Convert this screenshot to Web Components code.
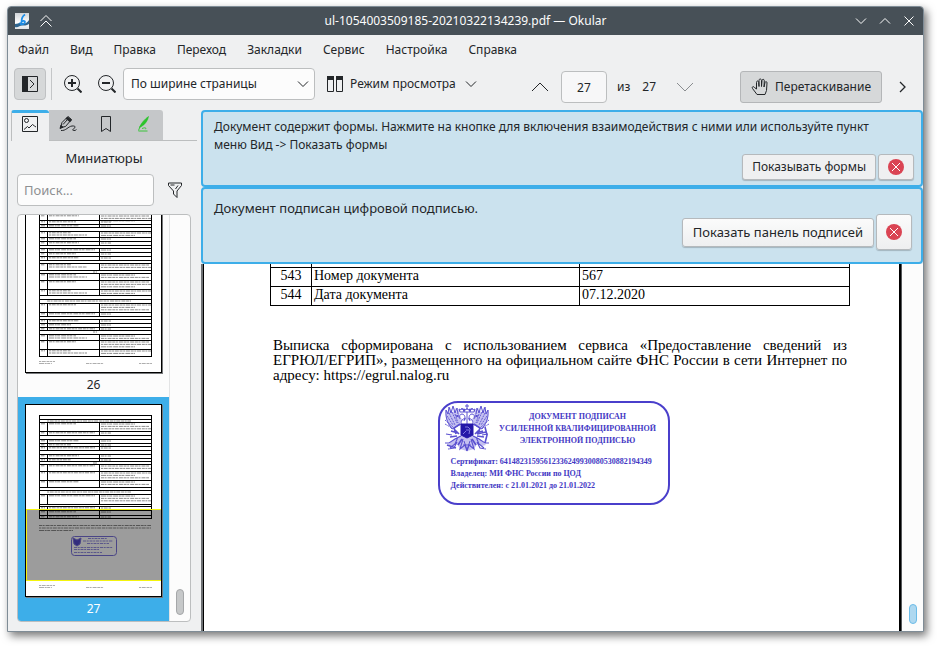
<!DOCTYPE html>
<html lang="ru">
<head>
<meta charset="utf-8">
<title>Okular</title>
<style>
html, body { height: 100%; margin: 0; background: #fff; }
body { font: 12px/18px "Noto Sans", sans-serif; color: #232629; box-sizing: border-box; padding: 6px 13px 14px 7px; --accent: #3daee9; --line: #bcbebf; }
</style>
</head>
<body>
<okular-window></okular-window>
<script>
const ICONS = {
  'side': [16, '<path d="M0 0h6v16H0z" fill="currentColor" stroke="none"/><path d="M.5.5h15v15H.5zM8 4l4 4-4 4"/>'],
  'zoom-in': [18, '<circle cx="8" cy="8" r="7.5"/><path d="M13.5 13.5l4 4" stroke-width="2"/><path d="M4 8h8M8 4v8" stroke-width="2"/>'],
  'zoom-out': [18, '<circle cx="8" cy="8" r="7.5"/><path d="M13.5 13.5l4 4" stroke-width="2"/><path d="M4 8h8" stroke-width="2"/>'],
  'columns': [16, '<path d="M.5.5h6v15h-6zM9.500.500h6v15h-6z"/><path d="M0 0h7v4H0zM9 0h7v4H9z" fill="currentColor" stroke="none"/>'],
  'down': [16, '<path d="M3 5.500l5 5 5-5"/>'],
  'down-big': [18, '<path d="M1 5l8 8 8-8"/>'],
  'up-big': [18, '<path d="M1 13l8-8 8 8"/>'],
  'up': [16, '<path d="M3 10.500l5-5 5 5"/>'],
  'right': [16, '<path d="M6 3l5 5-5 5" stroke-width="1.300"/>'],
  'close': [16, '<path d="M3.500 3.500l9 9M12.500 3.500l-9 9"/>'],
  'shade': [16, '<path d="M2.500 8L8 2.500 13.500 8M2.500 13.500L8 8l5.500 5.500"/>'],
  'image': [16, '<path d="M.5.5h15v15H.5z"/><circle cx="4.500" cy="4.500" r="2"/><path d="M2 13.500l3.500-3 1.500 1.500L10.500 8.500l2 1.500 1.500 1"/>'],
  'annotate': [18, '<path d="M1.500 12.500l1.500-5L9 1.500l3.500 3-6 7z"/><path d="M8.500 1.500l4.500 3.500-2 2.300-4.500-3.600z" fill="currentColor" stroke="none"/><path d="M4 9.500l4.500-5M1 13.500l3-1.200-2-2z" fill="currentColor"/><path d="M2 15.500c5 .5 7-4 11-4.500 4-.3 3.500 1.500 2 2.500s-2 2 0 2 2-.8 2.500-1"/>'],
  'bookmark': [16, '<path d="M3.500.5h9v15L8 12.500l-4.500 3z"/>'],
  'signature': [16, '<path d="M3.500 11.500C5 7 9 3 12.500.5c-.5 3.500-3 7.500-7 10z" fill="#2bc42b" stroke="#2bc42b" stroke-width=".6"/><path d="M4.500 9.500L2.500 14.500M2.500 15h9M6 12.500c3-1 4.500-1 3.500.7" stroke="#2bc42b" stroke-width=".9"/>'],
  'filter': [16, '<path d="M1.500 1h13v2.500L10 9v6.500L6.500 12V9L1.500 3.500zM3.500 3h4M11 3.500L8.500 7"/>'],
  'hand': [18, '<path d="M6 16.500L1.500 10.500C.5 8.500 2.500 8 3.500 9.500L5.500 11V4.500c0-2 2-2 2.200 0L8 8.500V2.500c0-2 2.300-2 2.500 0V8.500l.5-6c.2-1.700 2.300-1.500 2.300.2L13 9l1-4.500c.4-1.400 2.200-1 2 .4L15.500 12.500 14 16.500z"/>'],
  'cancel': [16, '<circle cx="8" cy="8" r="8" fill="#da4453" stroke="none"/><path d="M4 4l8 8M12 4l-8 8" stroke="#fff"/>'],
  'okular': [16, '<defs><linearGradient id="g" x2="0" y2="1"><stop stop-color="#cfd4d8"/><stop offset=".6" stop-color="#fff"/><stop offset="1" stop-color="#dfe3e6"/></linearGradient></defs><path d="M1 0h14v16H1z" fill="url(#g)" stroke="none"/><path d="M1 11C4 11 5 9 8 10s5 0 7-3v4c-3 2-5 1.500-7 1.500s-4 2.500-7 1.500z" fill="#2f6690" stroke="none"/><path d="M11 1.500C8.500 3 7.500 6 7.500 9c2-2 4.500-1 3 1S6.500 12 6 9.500" stroke="#1d8fe8" stroke-width="1.800"/>']
};

function define(name, html, setup) {
  const t = document.createElement('template');
  t.innerHTML = '<style>*{box-sizing:border-box}button,input,select{font:inherit;color:inherit;margin:0}button{display:flex;align-items:center;justify-content:center;padding:0;border:0;background:none}</style>' + html;
  customElements.define(name, class extends HTMLElement {
    constructor() {
      super();
      this.attachShadow({ mode: 'open' }).append(t.content.cloneNode(true));
    }
    connectedCallback() { if (setup) setup(this, this.shadowRoot); }
  });
}

define('ui-icon', '<style>:host{display:inline-flex;flex:none}svg{display:block;fill:none;stroke:currentColor}</style><svg aria-hidden="true"></svg>', (el, root) => {
  const [size, body] = ICONS[el.getAttribute('name')];
  const svg = root.querySelector('svg');
  svg.setAttribute('viewBox', `0 0 ${size} ${size}`);
  svg.setAttribute('width', size);
  svg.setAttribute('height', size);
  svg.innerHTML = body;
});

define('title-bar', `<style>
:host{display:flex;align-items:center;height:28px;background:#475057;color:#fcfcfc;padding:0 6px}
.side{display:flex;flex:1;gap:8px}
.end{justify-content:flex-end}
h1{font:inherit;margin:0}
</style>
<div class="side"><ui-icon name="okular"></ui-icon><button aria-label="Свернуть в заголовок"><ui-icon name="shade"></ui-icon></button></div>
<h1><slot></slot></h1>
<div class="side end"><button aria-label="Свернуть"><ui-icon name="down"></ui-icon></button><button aria-label="Развернуть"><ui-icon name="up"></ui-icon></button><button aria-label="Закрыть"><ui-icon name="close"></ui-icon></button></div>`);

define('menu-bar', `<style>
:host{display:flex;gap:21px;align-items:center;height:29px;padding:1px 10px 0}
</style>
<button>Файл</button><button>Вид</button><button>Правка</button><button>Переход</button><button>Закладки</button><button>Сервис</button><button>Настройка</button><button>Справка</button>`);

define('tool-bar', `<style>
:host{display:flex;justify-content:space-between;height:46px;padding:4px 13px 0 6px}
.group{display:flex;align-items:center;height:32px}
.pages{margin-top:3px}
.toggle{width:32px;height:32px;background:#d6d8d9;border:1px solid #bfc1c3;border-radius:4px}
.sep{width:1px;height:32px;background:#c4c6c8;margin:0 12px 0 5px}
.zoom{margin-right:16px}
.zoom+.zoom{margin-right:7px}
.combo{display:grid;align-items:center;width:192px;height:32px}
.combo>*{grid-area:1/1}
.combo ui-icon{justify-self:end;margin-right:4px;pointer-events:none}
select{appearance:none;width:100%;height:32px;border:1px solid var(--line);border-radius:4px;background:#fcfcfc;padding:0 7px}
.mode{gap:7px;margin-left:12px}
input{width:46px;height:32px;border:1px solid var(--line);border-radius:4px;background:#f7f7f8;text-align:center;margin:0 10px 0 12px;padding:0}
.total{margin:0 20px 0 12px}
.off{color:#8a8d90}
.drag{width:142px;height:32px;gap:6px;background:#d6d8d9;border:1px solid #b4b6b8;border-radius:3px;margin:0 12px 0 46px}
</style>
<div class="group">
<button class="toggle" aria-label="Боковая панель"><ui-icon name="side"></ui-icon></button><span class="sep"></span>
<button class="zoom" aria-label="Увеличить"><ui-icon name="zoom-in"></ui-icon></button><button class="zoom" aria-label="Уменьшить"><ui-icon name="zoom-out"></ui-icon></button>
<div class="combo"><select aria-label="Масштаб"><option>По ширине страницы</option></select><ui-icon name="down"></ui-icon></div>
<button class="mode"><ui-icon name="columns"></ui-icon>Режим просмотра<ui-icon name="down"></ui-icon></button>
</div>
<div class="group pages">
<button aria-label="Предыдущая страница"><ui-icon name="up-big"></ui-icon></button>
<input type="text" value="27" aria-label="Страница"><span>из</span><span class="total">27</span>
<button class="off" aria-label="Следующая страница"><ui-icon name="down-big"></ui-icon></button>
<button class="drag"><ui-icon name="hand"></ui-icon>Перетаскивание</button>
<button aria-label="Ещё"><ui-icon name="right"></ui-icon></button>
</div>`);

define('scroll-thumb', `<style>
:host{display:block;flex:none;box-sizing:border-box;width:8px;height:var(--size,26px);border:1px solid var(--edge,#a5a7a9);border-radius:4px;background:var(--fill,#c6c8c9)}
</style>`);

/* Miniature table rows: [bottom edge, kind]; kind = number of text lines, 'b' blank, 'c' number in the middle, 't' centred heading */
const SHEETS = {
  26: { top: 11, rows: [[18,2],[24,1],[34,2],[40,3],[44,1],[47,1],[51,'b'],[57,2],[61,1],[65,1],[68,'b'],[72,1],[76,1],[80,1],[83,'b'],[90,2],[93,'c'],[100,2],[109,3],[115,2],[119,'b'],[123,'t'],[132,3],[136,1],[139,'b'],[143,1],[147,1],[150,1],[154,'c'],[160,2],[169,3],[176,2]] },
  27: { top: 11, rows: [[15,'b'],[18,'t'],[27,3],[31,1],[35,'b'],[39,1],[42,1],[46,1],[50,'b'],[54,1],[57,1],[60,'c'],[67,2],[76,3],[83,2],[86,'b'],[90,'t'],[100,3],[102,'b'],[106,1],[111,1],[114,1]] }
};
function smudge(x, y, w, seed) {
  const dash = ['3 .6 2 1 4 .7', '2 .7 4 .8 3 .6', '5 .7 2 .5 3 1'][seed % 3];
  return `<path d="M${x} ${y}h${w}" stroke-dasharray="${dash}" stroke="#8c8c8c"/>`;
}
function sheet(n) {
  const { top, rows } = SHEETS[n];
  let s = '', y = top, k = 0;
  s += `<path d="M14 ${top + .5}h113" stroke="#000"/>`;
  for (const [b, kind] of rows) {
    if (typeof kind === 'number') {
      s += `<path d="M22.500 ${y}V${b}M74.500 ${y}V${b}" stroke="#000"/>`;
      s += smudge(16, y + 1.8, 4, k);
      s += smudge(24, y + 1.8, [30, 22, 46, 27][(kind * 3 + k) % 4], k);
      if (kind === 2 && k % 2) s += smudge(24, y + 4, 38, k);
      for (let i = 0; i < kind; i++) s += smudge(76, y + 2 + i * 2.4, kind === 1 ? 10 : [48, 50, 34][(i + k) % 3], k + i);
    } else if (kind === 'c') s += smudge(68, y + 2, 4, k);
    else if (kind === 't') s += smudge(22, y + 2, 84, k);
    s += `<path d="M14 ${b + .5}h113" stroke="#000"/>`;
    y = b; k++;
  }
  s += `<path d="M14.500 ${top}V${y}M126.500 ${top}V${y}" stroke="#000"/>`;
  s += '<g opacity=".7">' + smudge(14, 181.5, 16, 1) + smudge(14, 183.5, 13, 2) + smudge(61, 183.5, 18, 0) + smudge(114, 183.5, 13, 1) + '</g>';
  if (n === '27') {
    s += smudge(14, 121.5, 112, 0) + smudge(14, 124, 112, 1) + smudge(14, 126.500, 34, 2);
    s += '<g stroke="#7a72dc"><rect x="46.500" y="132.500" width="45" height="19" rx="3"/><path d="M48 134l4 2 4-2-1 6-3 2-3-2z" fill="#5348cc"/><path d="M63 134.500h19M58 137h30M62 139.500h22M49 143.500h39M49 145.500h25M49 148.500h28" stroke-width=".8" stroke-dasharray="3 .7 2 .8"/></g>';
    s += '<rect x="1.500" y="105.500" width="135" height="71" fill="#000" fill-opacity=".39" stroke="none"/><rect x="1.500" y="105.500" width="135" height="71" stroke="#f4f40c"/>';
  }
  return s;
}
define('page-thumb', `<style>
:host{display:flex;flex-direction:column;align-items:center;flex:none;box-sizing:border-box;padding-top:7px;height:224px}
:host([selected]){background:var(--accent);color:#fff}
svg{display:block;fill:none;box-shadow:1px 1px 0 #77797b;background:#fff}
span{line-height:24px}
</style><svg width="137" height="193" viewBox="0 0 137 193"></svg><span><slot></slot></span>`, (el, root) => {
  root.querySelector('svg').innerHTML = sheet(el.getAttribute('page')) + '<rect x=".5" y=".5" width="136" height="192" stroke="#000"/>';
});

define('side-panel', `<style>
:host{display:flex;flex-direction:column;box-sizing:border-box;width:193px;flex:none;padding:0 10px 9px 9px}
.tabs{display:flex;height:31px;margin:0 -6px 0 -6px;border-bottom:1px solid var(--line)}
.tabs button{width:38px;height:30px;background:#c5c7c9;padding-bottom:2px}
.tabs button[aria-selected=true]{height:31px;background:#eff0f1;border-top:3px solid var(--accent);border-left:1px solid var(--line);border-radius:3px 3px 0 0;padding:0 1px 6px 0}
.tabs button:last-child{border-radius:0 3px 0 0}
h2{font:inherit;font-size:13px;margin:8px 0 7px;text-align:center}
.find{display:flex;align-items:center;gap:13px;margin-bottom:8px}
input{width:137px;height:32px;border:1px solid var(--line);border-radius:4px;background:#fcfcfc;padding:0 6px;font-size:13px}
input::placeholder{color:#8e9092;opacity:1}
.list{display:flex;flex:1;min-height:0;border:1px solid var(--line);border-radius:4px;background:#fcfcfc;overflow:hidden}
.cells{flex:1;display:flex;flex-direction:column;justify-content:flex-end;border-right:1px solid #e3e4e5;overflow:hidden}
.rail{display:flex;align-items:flex-end;padding:6px}
</style>
<div class="tabs" role="tablist">
<button role="tab" aria-selected="true" aria-label="Миниатюры"><ui-icon name="image"></ui-icon></button><button role="tab" aria-label="Заметки"><ui-icon name="annotate"></ui-icon></button><button role="tab" aria-label="Закладки"><ui-icon name="bookmark"></ui-icon></button><button role="tab" aria-label="Подписи"><ui-icon name="signature"></ui-icon></button>
</div>
<h2>Миниатюры</h2>
<div class="find"><input type="search" placeholder="Поиск..." aria-label="Поиск"><button aria-label="Фильтр"><ui-icon name="filter"></ui-icon></button></div>
<div class="list"><div class="cells"><page-thumb page="26">26</page-thumb><page-thumb page="27" selected>27</page-thumb></div><div class="rail"><scroll-thumb></scroll-thumb></div></div>`);

define('message-bar', `<style>
:host{display:flex;flex-direction:column;box-sizing:border-box;height:77px;flex:none;border:2px solid var(--accent);border-radius:4px;background:#cbe2ee;padding:6px 7px 7px 11px}
:host([roomy]){padding:10px 9px 12px 11px;font-size:13px}
p{margin:0;padding-right:20px}
.acts{display:flex;justify-content:flex-end;align-items:center;gap:2px;margin-top:auto}
button{height:26px;padding:0 9px;border:1px solid #b5b9bc;border-radius:3px;background:#eff0f1;box-shadow:0 1px 1px #0003}
.x{width:36px;padding:0}
:host([roomy]) button{height:29px;padding:0 10px;background:linear-gradient(#fbfbfb,#eeeff0)}
:host([roomy]) .x{height:36px;padding:0}
:host([roomy]) p{height:15px}
</style>
<p><slot></slot></p><div class="acts"><button><slot name="action"></slot></button><button class="x" aria-label="Закрыть сообщение"><ui-icon name="cancel"></ui-icon></button></div>`);

define('sign-stamp', `<style>
:host{display:grid;box-sizing:border-box;grid-template-columns:49px 1fr;column-gap:5px;width:232px;height:104px;border:2px solid #4a3fcb;border-radius:20px;color:#4338c4;font:bold 8px/12px "Liberation Serif",serif;padding:0 9px 0 3px;align-content:start;margin:18px auto 0}
svg{display:block;fill:none;stroke:#5a50d0;margin-top:1px}
.head{text-align:center;padding-top:8px;white-space:nowrap}
.head p,.info p{margin:0}
.info{grid-column:1/-1;padding:3px 0 0 8px;white-space:nowrap}
</style>
<svg width="49" height="49" viewBox="0 0 49 49" role="img" aria-label="Герб">
<defs><g id="h">
<path d="M22 17C20 15 17 17 17 21L9 25C5 21 2 14 3 6l3 3 1-6 3 6 2-6 2 6 2-4 1 8 3 3z" fill="#c4c0f0" stroke="none"/>
<path d="M18 31l-7 4-6 6 4 1 5-2 3 5 7 2V33z" fill="#c4c0f0" stroke="none"/>
<path d="M23 15C20 14 18 16 18 20L9 25C6 21 2 15 3 6l2 4 1-7 2 6 2-7 2 7 2-5 1 6" stroke-width="1"/>
<path d="M4 12l6 9M6 9l6 12M9 8l5 11M12 10l3 9M2 16l8 7M2 20l7 4" stroke-width=".9" stroke-dasharray="2 .8"/>
<path d="M17 15c-1-3 0-5 2-5 2 0 3 2 3 4l-1 3M16 11l-3 1 3 1M17 8l-1-3 2 1 1-2 1 2 2-1-1 3z" stroke-width="1"/>
<path d="M18 32l-6 3-6 4-4 0M15 33l-3 7-5 4M20 35l-3 10 5-4 2 6M9 31l-6-1M14 38l-3 6-6 1" stroke-width="1.100"/>
<path d="M17 20l-6 4 2 6M12 26l4 4M8 27l7 2M7 33l7-1M19 35l-4 6" stroke-width="1.600"/>
</g></defs>
<use href="#h"/><use href="#h" transform="matrix(-1 0 0 1 48 0)"/>
<path d="M24 0v4M22 2h4M21 8l-1-3 3 1 1-2 1 2 3-1-1 3zM24 8v12M21 37l3 9 3-9M20 41h8"/>
<path d="M18 20h12v11l-6 3-6-3z" fill="#2417a8" stroke="#2417a8"/><path d="M20 30l3-3M22 23h3l2 2-1 5M23 26h3" stroke="#8d86e6" stroke-width=".9"/>
<path d="M34 30l9-2M42 23l2 8-2 8M4 41l9 3" stroke-width="1.600"/>
</svg>
<div class="head"><p>ДОКУМЕНТ ПОДПИСАН</p><p>УСИЛЕННОЙ КВАЛИФИЦИРОВАННОЙ</p><p>ЭЛЕКТРОННОЙ ПОДПИСЬЮ</p></div>
<div class="info"><p>Сертификат: 64148231595612336249930080530882194349</p><p>Владелец: МИ ФНС России по ЦОД</p><p>Действителен: с 21.01.2021 до 21.01.2022</p></div>`);

define('pdf-page', `<style>
:host{display:block;box-sizing:border-box;flex:1;background:#fff;color:#000;border-left:1px solid #000;border-right:2px solid #000;box-shadow:-2px 0 0 #6d7073,1px 0 0 #55585a;padding:0 49px 0 66px;font:14px/14px "Liberation Serif",serif;overflow:hidden;margin-left:2px}
table{width:100%;border-collapse:collapse;table-layout:fixed;margin-top:-16px;line-height:16px}
td{border:1px solid #000;height:19px;padding:0 2px 2px}
.n{width:41px;text-align:center}
.v{width:270px}
.note{margin:32px 3px 0 3px;text-align:justify;font-size:15px;line-height:15px}
.note span{display:block;text-align-last:justify}
.note span:last-child{text-align-last:left}
.seal{padding-right:13px}
</style>
<table><tbody><tr><td class="n"></td><td></td><td class="v"></td></tr><tr><td class="n">543</td><td>Номер документа</td><td>567</td></tr><tr><td class="n">544</td><td>Дата документа</td><td>07.12.2020</td></tr></tbody></table>
<p class="note"><span>Выписка сформирована с использованием сервиса «Предоставление сведений из</span><span>ЕГРЮЛ/ЕГРИП», размещенного на официальном сайте ФНС России в сети Интернет по</span><span>адресу: https://egrul.nalog.ru</span></p>
<div class="seal"><sign-stamp></sign-stamp></div>`);

define('doc-view', `<style>
:host{display:flex;flex-direction:column;flex:1;min-width:0}
.body{display:flex;flex:1;min-height:0;background:#fcfcfc}
.rail{display:flex;align-items:flex-end;padding:7px 6px 7px 8px}
scroll-thumb{--size:20px;--fill:#aed8f0;--edge:#6cbce8}
</style>
<message-bar>Документ содержит формы. Нажмите на кнопке для включения взаимодействия с ними или используйте пункт меню Вид -&gt; Показать формы<span slot="action">Показывать формы</span></message-bar>
<message-bar roomy>Документ подписан цифровой подписью.<span slot="action">Показать панель подписей</span></message-bar>
<div class="body"><pdf-page></pdf-page><div class="rail"><scroll-thumb></scroll-thumb></div></div>`);

define('okular-window', `<style>
:host{display:flex;flex-direction:column;height:100%;background:#eff0f1;border:1px solid #7f8c96;border-radius:4px 4px 0 0;box-shadow:3px 4px 8px #0008;overflow:hidden;box-sizing:border-box}
main{display:flex;flex:1;min-height:0}
</style>
<title-bar>ul-1054003509185-20210322134239.pdf — Okular</title-bar>
<menu-bar></menu-bar><tool-bar></tool-bar>
<main><side-panel></side-panel><doc-view></doc-view></main>`);
</script>
</body>
</html>
